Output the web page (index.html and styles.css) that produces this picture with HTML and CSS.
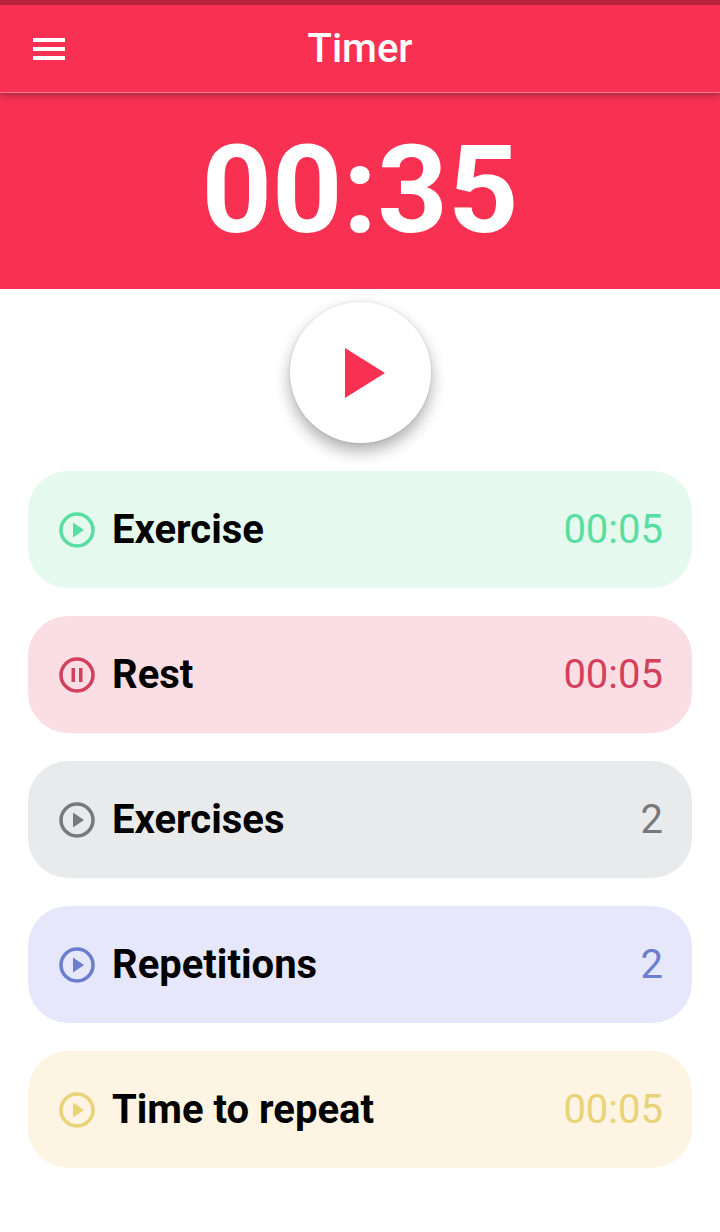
FILE: index.html
```html
<!DOCTYPE html>
<html lang="en">
<head>
<meta charset="utf-8">
<meta name="viewport" content="width=device-width, initial-scale=1">
<title>Timer</title>
<link rel="stylesheet" href="styles.css">
</head>
<body>
<header class="app-bar">
  <button class="menu" type="button" aria-label="Menu"><svg viewBox="0 0 32 22"><path d="M0 0h32v4H0zM0 9h32v4H0zM0 18h32v4H0z"/></svg></button>
  <h1 class="title">Timer</h1>
</header>
<main>
  <div class="clock">00:35</div>
  <div class="play-area">
    <button class="play" type="button" aria-label="Start"><svg viewBox="0 0 40 50"><path d="M0 0v50l40-25z"/></svg></button>
  </div>
  <div class="settings">
    <button class="card green" type="button"><svg class="icon" viewBox="0 0 36 36"><circle cx="18" cy="18" r="16"/><path d="M14 10.500v15l11-7.500z"/></svg><span class="label">Exercise</span><span class="value">00:05</span></button>
    <button class="card red" type="button"><svg class="icon" viewBox="0 0 36 36"><circle cx="18" cy="18" r="16"/><path d="M12.500 11h3.500v14h-3.500zM20 11h3.500v14h-3.500z"/></svg><span class="label">Rest</span><span class="value">00:05</span></button>
    <button class="card gray" type="button"><svg class="icon" viewBox="0 0 36 36"><circle cx="18" cy="18" r="16"/><path d="M14 10.500v15l11-7.500z"/></svg><span class="label">Exercises</span><span class="value">2</span></button>
    <button class="card blue" type="button"><svg class="icon" viewBox="0 0 36 36"><circle cx="18" cy="18" r="16"/><path d="M14 10.500v15l11-7.500z"/></svg><span class="label">Repetitions</span><span class="value">2</span></button>
    <button class="card yellow" type="button"><svg class="icon" viewBox="0 0 36 36"><circle cx="18" cy="18" r="16"/><path d="M14 10.500v15l11-7.500z"/></svg><span class="label">Time to repeat</span><span class="value">00:05</span></button>
  </div>
</main>
</body>
</html>
```

FILE: styles.css
```css
* { box-sizing: border-box; }
body { margin: 0; background: #fff; font-family: Roboto, sans-serif; }
button { border: 0; margin: 0; padding: 0; background: none; font: inherit; color: inherit; cursor: pointer; }
svg { display: block; fill: currentColor; }
.app-bar { position: relative; display: grid; grid-template-columns: 64px 1fr 64px; align-items: center; height: 93px; padding: 0 17px; border-top: 5px solid #b8243f; border-bottom: 1px solid #fb7a90; background: #f83052; color: #fff; box-shadow: 0 2px 7px rgba(60, 40, 50, 0.5); }
.menu { display: grid; place-items: center; width: 64px; height: 64px; }
.menu svg { width: 32px; height: 22px; }
.title { margin: 0; font-size: 40px; line-height: 48px; font-weight: 500; text-align: center; }
.clock { height: 196px; background: #f83052; color: #fff; font-size: 123px; line-height: 194px; font-weight: 700; text-align: center; }
.play-area { display: flex; justify-content: center; padding: 13px 0 28px; }
.play { display: grid; place-items: center; width: 141px; height: 141px; padding: 1px 0 0 10px; border-radius: 50%; background: #fff; color: #f83052; box-shadow: 0 8px 16px rgba(0, 0, 0, 0.32), 0 0 3px rgba(0, 0, 0, 0.1); }
.play svg { width: 40px; height: 50px; }
.settings { display: grid; gap: 28px; padding: 0 28px 28px; }
.card { display: flex; align-items: center; gap: 17px; height: 117px; padding: 0 29px 0 31px; border-radius: 40px; font-size: 40px; line-height: 48px; }
.icon { width: 36px; height: 36px; }
.icon circle { fill: none; stroke: currentColor; stroke-width: 3.5; }
.label { color: #000; font-weight: 700; }
.value { margin-left: auto; }
.green { background: #e5f9ee; color: #58dda3; }
.red { background: #fbdee3; color: #d2405d; }
.gray { background: #e9eaeb; color: #77797d; }
.blue { background: #e6e7fa; color: #6c7fcf; }
.yellow { background: #fef4e4; color: #e8d377; }
```
